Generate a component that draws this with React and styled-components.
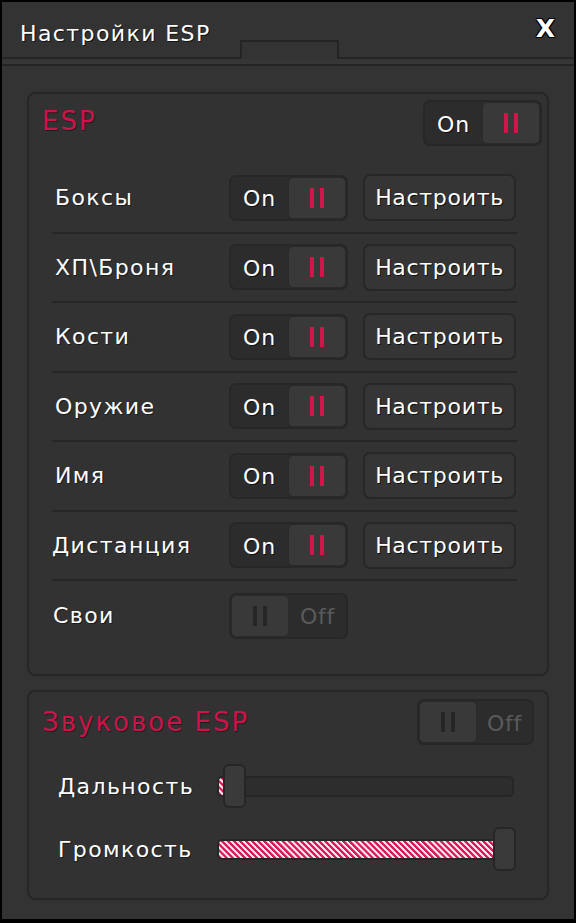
import React from 'react';
import styled, { createGlobalStyle } from 'styled-components';

const GlobalStyle = createGlobalStyle`
  html, body { margin: 0; padding: 0; background: #000; }
  body { font-family: "DejaVu Sans", Verdana, sans-serif; color: #fff; }
  * { box-sizing: border-box; }
`;

const Window = styled.div`
  width: 576px;
  height: 923px;
  border: 2px solid #000;
  border-bottom-width: 4px;
  background: #333;
  display: flex;
  flex-direction: column;
`;

const TitleBar = styled.div`
  height: 57px;
  display: grid;
  grid-template-columns: 238px 99px 1fr auto;
  align-items: center;
  border-bottom: 2px solid #242424;
`;

const Title = styled.div`
  padding-left: 18px;
  font-size: 22px;
  letter-spacing: 1.4px;
  white-space: nowrap;
  text-shadow: 1px 1px 0 #111;
  margin-top: 7px;
`;

const Tab = styled.div`
  align-self: end;
  height: 19px;
  border: 2px solid #242424;
  border-bottom: none;
  margin-bottom: -2px;
  background: #333;
`;

const Close = styled.div`
  padding-right: 19px;
  font-weight: bold;
  font-size: 25px;
  line-height: 1;
  margin-top: -2px;
  text-shadow: 1px 1px 0 #000, -1px -1px 0 #000, 1px -1px 0 #000, -1px 1px 0 #000;
`;

const Band = styled.div`
  height: 7px;
  background: #363636;
  border-bottom: 2px solid #242424;
`;

const Content = styled.div`
  padding: 26px 25px 0;
  display: flex;
  flex-direction: column;
  gap: 14px;
`;

const Panel = styled.div`
  border: 2px solid #262626;
  border-radius: 8px;
  background: #323232;
  height: ${p => p.h}px;
  display: flex;
  flex-direction: column;
`;

const PanelHead = styled.div`
  height: ${p => p.h}px;
  flex-shrink: 0;
  display: flex;
  justify-content: space-between;
  align-items: flex-start;
  padding: ${p => p.pad};
`;

const PanelTitle = styled.div`
  color: #c9154a;
  font-size: 26px;
  letter-spacing: 2px;
  padding-top: ${p => p.top}px;
  text-shadow: 1px 1px 0 #1c1c1c;
`;

const Rows = styled.div`
  padding: 0 30px 0 23px;
`;

const Row = styled.div`
  height: 69.5px;
  display: flex;
  align-items: center;
  border-bottom: ${p => (p.last ? 'none' : '2px solid #262626')};
`;

const Label = styled.div`
  width: ${p => p.w || 177}px;
  padding-left: ${p => p.pl ?? 3}px;
  font-size: 22px;
  letter-spacing: 1.4px;
  white-space: nowrap;
  text-shadow: 1px 1px 0 #1c1c1c;
`;

const ToggleBox = styled.div`
  width: ${p => p.w || 119}px;
  height: 46px;
  border: 2px solid #272727;
  border-radius: 7px;
  background: #2c2c2c;
  display: flex;
  flex-direction: ${p => (p.on ? 'row' : 'row-reverse')};
  overflow: hidden;
`;

const ToggleText = styled.div`
  flex: 1;
  display: flex;
  align-items: center;
  justify-content: center;
  font-size: 22px;
  letter-spacing: 0.8px;
  padding-top: 2px;
  color: ${p => (p.on ? '#fff' : '#5a5a5a')};
  text-shadow: ${p => (p.on ? '1px 1px 0 #111' : 'none')};
`;

const Knob = styled.div`
  width: 58px;
  height: 100%;
  background: #393939;
  border-radius: 5px;
  border: 1px solid #2a2a2a;
  display: flex;
  align-items: center;
  justify-content: center;
  gap: 6px;
`;

const Bar = styled.span`
  width: 4px;
  height: 20px;
  background: ${p => (p.on ? '#d0174b' : '#262626')};
`;

const Button = styled.div`
  margin-left: 15px;
  width: 153px;
  height: 47px;
  border: 2px solid #272727;
  border-radius: 7px;
  background: #353535;
  display: flex;
  align-items: center;
  justify-content: center;
  font-size: 22px;
  letter-spacing: 0.7px;
  text-shadow: 1px 1px 0 #111;
`;

const SliderRow = styled.div`
  height: 63px;
  display: flex;
  align-items: center;
  padding: 0 33px 0 28px;
`;

const Track = styled.div`
  position: relative;
  flex: 1;
  height: 21px;
  border: 2px solid #262626;
  border-radius: 5px;
  background: #2d2d2d;
`;

const Fill = styled.div`
  height: 100%;
  border-radius: 3px 0 0 3px;
  background: repeating-linear-gradient(
    45deg,
    #d81b5c 0px,
    #d81b5c 1.9px,
    #f7c6d6 2.4px,
    #ffffff 3.7px,
    #e98aa9 4.3px
  );
`;

const Thumb = styled.div`
  position: absolute;
  top: -14px;
  width: 23px;
  height: 44px;
  border: 2px solid #262626;
  border-radius: 6px;
  background: #3a3a3a;
`;

const Toggle = ({ on, w }) => (
  <ToggleBox on={on} w={w}>
    <ToggleText on={on}>{on ? 'On' : 'Off'}</ToggleText>
    <Knob>
      <Bar on={on} />
      <Bar on={on} />
    </Knob>
  </ToggleBox>
);

const rows = ['Боксы', 'ХП\\Броня', 'Кости', 'Оружие', 'Имя', 'Дистанция'];

const Slider = ({ label, value }) => (
  <SliderRow>
    <Label w={160} pl={1}>{label}</Label>
    <Track>
      <Fill style={{ width: `${value}%` }} />
      <Thumb style={{ left: `calc(${value}% - ${value > 50 ? 19 : 0}px)` }} />
    </Track>
  </SliderRow>
);

export default function App() {
  return (
    <Window>
      <GlobalStyle />
      <TitleBar>
        <Title>Настройки ESP</Title>
        <Tab />
        <div />
        <Close>X</Close>
      </TitleBar>
      <Band />
      <Content>
        <Panel h={584}>
          <PanelHead h={70} pad="6px 5px 0 13px">
            <PanelTitle top={6}>ESP</PanelTitle>
            <Toggle on />
          </PanelHead>
          <Rows>
            {rows.map(r => (
              <Row key={r}>
                <Label pl={r === 'Дистанция' ? 0 : 3}>{r}</Label>
                <Toggle on />
                <Button>Настроить</Button>
              </Row>
            ))}
            <Row last>
              <Label pl={1}>Свои</Label>
              <Toggle />
            </Row>
          </Rows>
        </Panel>
        <Panel h={210}>
          <PanelHead h={63} pad="7px 13px 0 13px">
            <PanelTitle top={8}>Звуковое ESP</PanelTitle>
            <Toggle w={117} />
          </PanelHead>
          <Slider label="Дальность" value={1.2} />
          <Slider label="Громкость" value={100} />
        </Panel>
      </Content>
    </Window>
  );
}
